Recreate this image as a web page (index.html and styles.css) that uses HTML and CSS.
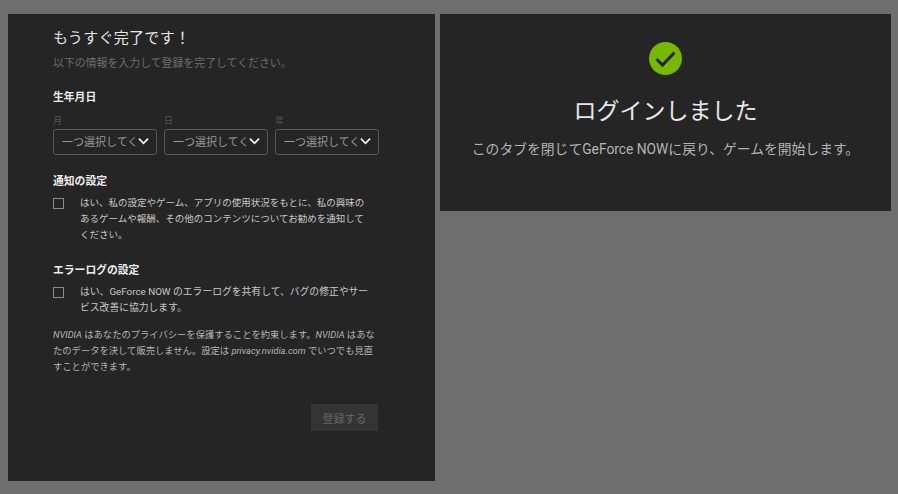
FILE: index.html
```html
<!DOCTYPE html>
<html lang="ja">
<head>
<meta charset="utf-8">
<title>GeForce NOW</title>
<link rel="stylesheet" href="styles.css">
</head>
<body>
<main class="page">
  <section class="panel form-panel">
    <h1 class="title">もうすぐ完了です！</h1>
    <p class="subtitle">以下の情報を入力して登録を完了してください。</p>
    <h2 class="heading dob-heading">生年月日</h2>
    <div class="selects">
      <div class="field">
        <span class="field-label">月</span>
        <div class="select"><span class="select-text">一つ選択してください</span><svg class="chevron" viewBox="0 0 12 8"><path d="M1 1.5 6 6.5 11 1.5"/></svg></div>
      </div>
      <div class="field">
        <span class="field-label">日</span>
        <div class="select"><span class="select-text">一つ選択してください</span><svg class="chevron" viewBox="0 0 12 8"><path d="M1 1.5 6 6.5 11 1.5"/></svg></div>
      </div>
      <div class="field">
        <span class="field-label">年</span>
        <div class="select"><span class="select-text">一つ選択してください</span><svg class="chevron" viewBox="0 0 12 8"><path d="M1 1.5 6 6.5 11 1.5"/></svg></div>
      </div>
    </div>
    <h2 class="heading notify-heading">通知の設定</h2>
    <div class="check-row">
      <span class="checkbox"></span>
      <p class="check-text">はい、私の設定やゲーム、アプリの使用状況をもとに、私の興味のあるゲームや報酬、その他のコンテンツについてお勧めを通知してください。</p>
    </div>
    <h2 class="heading error-heading">エラーログの設定</h2>
    <div class="check-row">
      <span class="checkbox"></span>
      <p class="check-text check-text-wide">はい、GeForce NOW のエラーログを共有して、バグの修正やサービス改善に協力します。</p>
    </div>
    <p class="privacy"><em>NVIDIA</em> はあなたのプライバシーを保護することを約束します。<em>NVIDIA</em> はあなたのデータを決して販売しません。設定は <em>privacy.nvidia.com</em> でいつでも見直すことができます。</p>
    <div class="actions"><span class="submit">登録する</span></div>
  </section>
  <section class="panel done-panel">
    <svg class="done-icon" viewBox="0 0 33 33"><circle cx="16.5" cy="16.5" r="16.5" fill="#76b900"/><path d="M7.5 17 13.5 23 25.5 10.5" fill="none" stroke="#232323" stroke-width="3"/></svg>
    <h1 class="done-title">ログインしました</h1>
    <p class="done-text">このタブを閉じてGeForce NOWに戻り、ゲームを開始します。</p>
  </section>
</main>
</body>
</html>
```
FILE: styles.css
```css
* { box-sizing: border-box; margin: 0; padding: 0; }
html, body { height: 100%; }
body {
  background: #6e6e6e;
  font-family: Roboto, "Noto Sans CJK JP", sans-serif;
  overflow: hidden;
}
.page {
  display: flex;
  align-items: flex-start;
  gap: 5px;
  padding: 14px 7px 0 8px;
}
.panel { background: #252525; }
.form-panel {
  width: 427px;
  height: 467px;
  padding: 15px 57px 0 45px;
}
.title {
  font-size: 15px;
  line-height: 18px;
  font-weight: 400;
  color: #e6e6e6;
  letter-spacing: 0.3px;
}
.subtitle {
  margin-top: 9px;
  font-size: 10.9px;
  line-height: 16px;
  color: #6e6e6e;
}
.heading {
  font-size: 10.8px;
  line-height: 16px;
  font-weight: 700;
  color: #eeeeee;
}
.dob-heading { margin-top: 18px; }
.selects {
  display: flex;
  gap: 7px;
  margin-top: 9px;
}
.field { display: flex; flex-direction: column; width: 104px; }
.field-label {
  font-size: 9px;
  line-height: 13px;
  color: #555555;
}
.select {
  display: flex;
  align-items: center;
  height: 26px;
  margin-top: 1px;
  padding: 0 7px 2px 8px;
  border: 1px solid #585858;
  border-radius: 3px;
}
.select-text {
  flex: 1;
  min-width: 0;
  overflow: hidden;
  white-space: nowrap;
  font-size: 11px;
  color: #989898;
}
.chevron {
  flex: none;
  width: 11px;
  height: 8px;
  fill: none;
  stroke: #f0f0f0;
  stroke-width: 2;
}
.notify-heading { margin: 19px 0 1px; }
.error-heading { margin: 20px 0 1px; }
.check-row {
  display: flex;
  gap: 16px;
  margin-top: 3px;
}
.checkbox {
  flex: none;
  width: 11px;
  height: 11px;
  margin-top: 5px;
  border: 1px solid #8a8a8a;
}
.check-text {
  width: 292px;
  margin-top: 2px;
  font-size: 9.5px;
  line-height: 16px;
  color: #c8c8c8;
}
.check-text-wide { font-size: 9.8px; }
.privacy {
  margin-top: 11px;
  font-size: 9.3px;
  line-height: 16px;
  color: #b4b4b4;
}
.actions {
  display: flex;
  justify-content: flex-end;
  margin-top: 29px;
}
.submit {
  display: flex;
  align-items: center;
  justify-content: center;
  width: 67px;
  height: 27px;
  background: #343434;
  font-size: 11px;
  color: #666666;
}
.done-panel {
  width: 451px;
  height: 197px;
  display: flex;
  flex-direction: column;
  align-items: center;
  padding-top: 28px;
}
.done-icon { width: 33px; height: 33px; display: block; }
.done-title {
  margin-top: 21px;
  font-size: 23px;
  line-height: 32px;
  font-weight: 400;
  color: #e8e8e8;
}
.done-text {
  margin-top: 11px;
  font-size: 13.8px;
  line-height: 20px;
  color: #b4b4b4;
}
```
